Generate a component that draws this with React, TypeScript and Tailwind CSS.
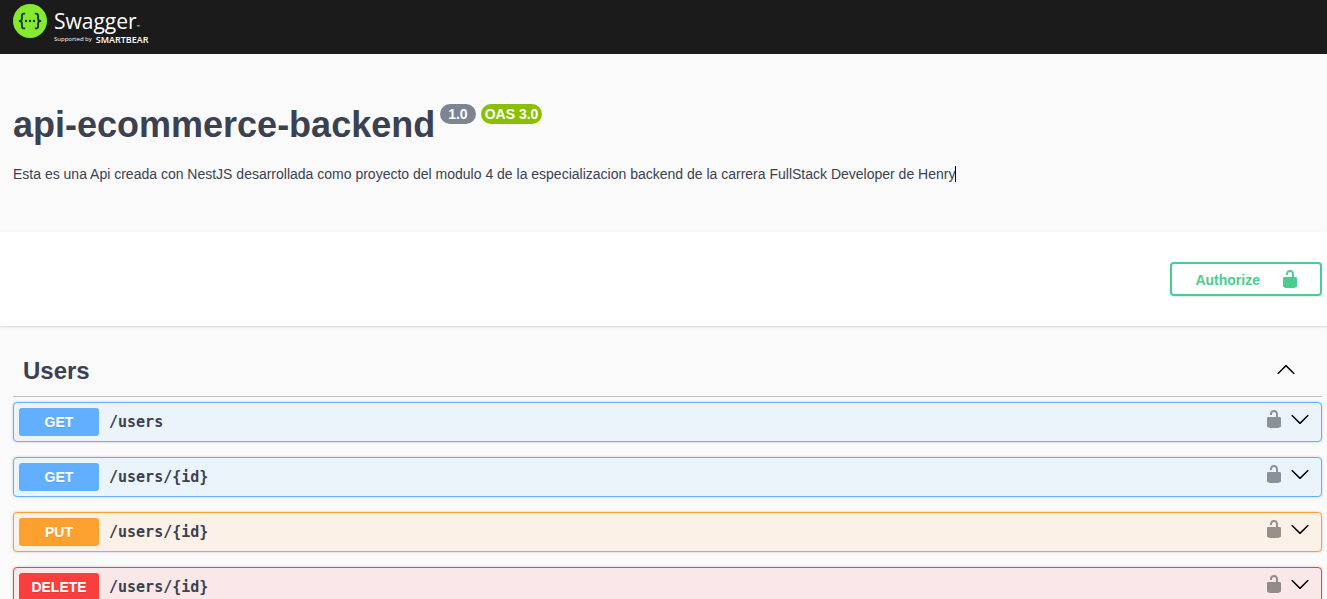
import React from "react";

type Method = "GET" | "PUT" | "DELETE";

const operations: { method: Method; path: string }[] = [
  { method: "GET", path: "/users" },
  { method: "GET", path: "/users/{id}" },
  { method: "PUT", path: "/users/{id}" },
  { method: "DELETE", path: "/users/{id}" },
];

const styles: Record<Method, { row: string; badge: string }> = {
  GET: { row: "border-[#61affe] bg-[#ebf3fb]", badge: "bg-[#61affe]" },
  PUT: { row: "border-[#fca130] bg-[#fbf1e6]", badge: "bg-[#fca130]" },
  DELETE: { row: "border-[#f93e3e] bg-[#fae7e7]", badge: "bg-[#f93e3e]" },
};

function UnlockIcon({ className }: { className?: string }) {
  return (
    <svg viewBox="0 0 20 20" className={className} fill="currentColor" aria-hidden="true">
      <path d="M15.8 8H14V5.6C14 2.703 12.665 1 10 1 7.334 1 6 2.703 6 5.6V6h2v-.801C8 3.754 8.797 3 10 3c1.203 0 2 .754 2 2.199V8H4c-.553 0-1 .646-1 1.199V17c0 .549.428 1.139.951 1.307l1.197.387C5.672 18.861 6.55 19 7.1 19h5.8c.549 0 1.428-.139 1.951-.307l1.196-.387c.524-.167.953-.757.953-1.306V9.199C17 8.646 16.352 8 15.8 8z" />
    </svg>
  );
}

function ArrowDown() {
  return (
    <svg viewBox="0 0 20 20" className="size-5" aria-hidden="true">
      <path d="M17.418 6.109c.272-.268.709-.268.979 0s.271.701 0 .969l-7.908 7.83c-.27.268-.707.268-.979 0l-7.908-7.83c-.27-.268-.27-.701 0-.969.271-.268.709-.268.979 0L10 13.25l7.418-7.141z" />
    </svg>
  );
}

function ArrowUp() {
  return (
    <svg viewBox="0 0 20 20" className="size-5" aria-hidden="true">
      <path d="M17.418 14.908c.272.268.709.268.979 0s.271-.701 0-.969l-7.908-7.83c-.27-.268-.707-.268-.979 0l-7.908 7.83c-.27.268-.27.701 0 .969.271.268.709.268.979 0L10 7.767l7.418 7.141z" />
    </svg>
  );
}

function LogoMark() {
  return (
    <svg viewBox="0 0 34 34" className="size-[34px]" aria-hidden="true">
      <circle cx="17" cy="17" r="17" fill="#85ea2d" />
      <g fill="none" stroke="#173647" strokeWidth="1.9" strokeLinejoin="round">
        <path d="M12.2 9.6h-1.2c-1.4 0-2.1.8-2.1 2.2v2.6c0 1.5-.7 2.4-2.2 2.6 1.5.2 2.2 1.1 2.2 2.6v2.6c0 1.4.7 2.2 2.1 2.2h1.2" />
        <path d="M21.8 9.6h1.2c1.4 0 2.1.8 2.1 2.2v2.6c0 1.5.7 2.4 2.2 2.6-1.5.2-2.2 1.1-2.2 2.6v2.6c0 1.4-.7 2.2-2.1 2.2h-1.2" />
      </g>
      <g fill="#173647">
        <circle cx="13" cy="17" r="1.2" />
        <circle cx="17" cy="17" r="1.2" />
        <circle cx="21" cy="17" r="1.2" />
      </g>
    </svg>
  );
}

export default function App() {
  return (
    <div className="min-h-screen bg-[#fafafa] font-['Liberation_Sans',sans-serif] text-[#3b4151]">
      <header className="h-[54px] bg-[#1b1b1b] px-[13px] pt-1">
        <a href="#" aria-label="Swagger" className="inline-flex gap-[7px] font-['Open_Sans',sans-serif] text-white">
          <LogoMark />
          <span className="flex flex-col pt-[3px]">
            <span className="flex items-end text-[21px] leading-7">
              Swagger<span className="text-[4px] leading-4">™</span>
            </span>
            <span className="flex items-center gap-1 leading-[9px]">
              <span className="text-[6px]">Supported by</span>
              <span className="text-[9px] font-semibold">SMARTBEAR</span>
            </span>
          </span>
        </a>
      </header>

      <section className="px-[13px] pt-[50px] pb-12">
        <div className="flex items-start gap-[5px]">
          <h1 className="text-4xl leading-[42px] font-bold">api-ecommerce-backend</h1>
          <span className="rounded-full bg-[#7d8492] px-2 text-sm leading-5 font-bold text-white">1.0</span>
          <span className="rounded-full bg-[#89bf04] px-1 text-sm leading-5 font-bold text-white">OAS 3.0</span>
        </div>
        <p className="mt-[18px] flex items-center text-sm leading-5">
          <span>
            Esta es una Api creada con NestJS desarrollada como proyecto del modulo 4 de la especializacion backend de
            la carrera FullStack Developer de Henry
          </span>
          <span className="h-4 w-px bg-black" />
        </p>
      </section>

      <section className="flex justify-end bg-white py-[30px] pr-[5px] shadow-[0_1px_2px_rgba(0,0,0,0.15)]">
        <button
          type="button"
          className="flex items-center rounded border-2 border-[#49cc90] py-1 pr-[20px] pl-[23px] text-sm font-bold text-[#49cc90] shadow-[0_1px_2px_rgba(0,0,0,0.1)]"
        >
          <span className="pt-[2px] pr-5 leading-5">Authorize</span>
          <UnlockIcon className="size-5" />
        </button>
      </section>

      <main className="pt-5 pr-[5px] pb-5 pl-[13px]">
        <div className="flex items-center justify-between border-b border-[#3b4151]/30 py-[10px] pr-[26px] pl-[10px]">
          <h2 className="text-2xl leading-[30px] font-bold">Users</h2>
          <button type="button" aria-label="Collapse Users" className="pb-1">
            <ArrowUp />
          </button>
        </div>
        <ul className="mt-[5px] flex flex-col gap-[15px]">
          {operations.map(({ method, path }) => (
            <li
              key={method + path}
              className={`flex items-center rounded border p-[5px] shadow-[0_0_3px_rgba(0,0,0,0.19)] ${styles[method].row}`}
            >
              <button type="button" className="flex flex-1 items-center gap-[10px] text-left">
                <span
                  className={`w-20 rounded-[3px] text-center text-sm leading-7 font-bold text-white [text-shadow:0_1px_0_rgba(0,0,0,0.1)] ${styles[method].badge}`}
                >
                  {method}
                </span>
                <span className="font-['DejaVu_Sans_Mono',monospace] text-[15px] leading-5 font-bold">{path}</span>
              </button>
              <span className="flex gap-[6px] pr-[6px] pb-[6px] text-black">
                <button type="button" aria-label="Authorization unlocked">
                  <UnlockIcon className="size-5 opacity-40" />
                </button>
                <button type="button" aria-label="Expand operation">
                  <ArrowDown />
                </button>
              </span>
            </li>
          ))}
        </ul>
      </main>
    </div>
  );
}
